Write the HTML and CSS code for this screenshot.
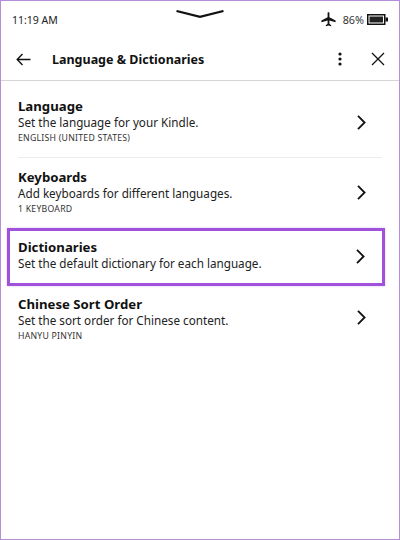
FILE: index.html
```html
<!DOCTYPE html>
<html lang="en">
<head>
<meta charset="utf-8">
<title>Language &amp; Dictionaries</title>
<link rel="stylesheet" href="styles.css">
</head>
<body>
<div class="screen">
  <div class="status">
    <span class="time">11:19 AM</span>
    <svg class="swipe" width="48" height="9" viewBox="0 0 48 9"><path d="M0.5 1L24 6.8L47.5 1" fill="none" stroke="#111" stroke-width="2.2"/></svg>
    <div class="status-right">
      <svg class="plane" width="15" height="15" viewBox="0 0 15 15"><path d="M6.6 0.8C6.6 0.2 8.4 0.2 8.4 0.8V5.3L14.6 8.6V10.2L8.4 8.4V11.8L10.2 13.2V14.2L7.5 13.5L4.8 14.2V13.2L6.6 11.8V8.4L0.4 10.2V8.6L6.6 5.3Z" fill="#111"/></svg>
      <span class="pct">86%</span>
      <svg class="battery" width="21" height="11" viewBox="0 0 21 11"><rect x="0.75" y="0.75" width="17" height="9.5" fill="none" stroke="#111" stroke-width="1.5"/><rect x="2.5" y="2.5" width="13.5" height="6" fill="#222"/><rect x="18.5" y="3.5" width="2.5" height="4" fill="#111"/></svg>
    </div>
  </div>
  <header class="toolbar">
    <svg class="back" width="15" height="13" viewBox="0 0 15 13"><path d="M6.5 1L1.2 6.5L6.5 12M1.2 6.5H14.5" fill="none" stroke="#111" stroke-width="1.4"/></svg>
    <h1 class="title">Language &amp; Dictionaries</h1>
    <svg class="more" width="4" height="14" viewBox="0 0 4 14"><circle cx="2" cy="2" r="1.6" fill="#111"/><circle cx="2" cy="7" r="1.6" fill="#111"/><circle cx="2" cy="12" r="1.6" fill="#111"/></svg>
    <svg class="close" width="14" height="14" viewBox="0 0 14 14"><path d="M1 1L13 13M13 1L1 13" fill="none" stroke="#111" stroke-width="1.3"/></svg>
  </header>
  <main class="list">
    <div class="row row-language">
      <div class="text">
        <div class="name">Language</div>
        <div class="desc">Set the language for your Kindle.</div>
        <div class="value">ENGLISH (UNITED STATES)</div>
      </div>
      <svg class="chev" width="9" height="15" viewBox="0 0 9 15"><path d="M1 0.8L7.6 7.5L1 14.2" fill="none" stroke="#111" stroke-width="1.8"/></svg>
    </div>
    <div class="rule"></div>
    <div class="row row-keyboards">
      <div class="text">
        <div class="name">Keyboards</div>
        <div class="desc">Add keyboards for different languages.</div>
        <div class="value">1 KEYBOARD</div>
      </div>
      <svg class="chev chev-up" width="9" height="15" viewBox="0 0 9 15"><path d="M1 0.8L7.6 7.5L1 14.2" fill="none" stroke="#111" stroke-width="1.8"/></svg>
    </div>
    <div class="row row-dict">
      <div class="text text-dict">
        <div class="name">Dictionaries</div>
        <div class="desc">Set the default dictionary for each language.</div>
      </div>
      <svg class="chev chev-up" width="9" height="15" viewBox="0 0 9 15"><path d="M1 0.8L7.6 7.5L1 14.2" fill="none" stroke="#111" stroke-width="1.8"/></svg>
    </div>
    <div class="row row-chinese">
      <div class="text text-chinese">
        <div class="name">Chinese Sort Order</div>
        <div class="desc">Set the sort order for Chinese content.</div>
        <div class="value">HANYU PINYIN</div>
      </div>
      <svg class="chev" width="9" height="15" viewBox="0 0 9 15"><path d="M1 0.8L7.6 7.5L1 14.2" fill="none" stroke="#111" stroke-width="1.8"/></svg>
    </div>
  </main>
</div>
</body>
</html>
```

FILE: styles.css
```css
* { box-sizing: border-box; }
html, body { margin: 0; padding: 0; }
body { width: 400px; height: 540px; background: #fff; overflow: hidden; font-family: "Noto Sans", "Open Sans", sans-serif; color: #111; }
.screen { width: 400px; height: 540px; border: 1px solid #b48fd8; background: #fff; display: flex; flex-direction: column; }
.status { height: 37px; flex: none; display: flex; align-items: center; justify-content: space-between; padding: 0 11px 0 11px; position: relative; }
.time { font-size: 10.5px; color: #222; }
.swipe { position: absolute; left: 175px; top: 9px; }
.status-right { display: flex; align-items: center; }
.plane { margin-right: 7px; }
.pct { font-size: 10.8px; color: #333; margin-right: 3px; }
.toolbar { height: 43px; flex: none; display: flex; align-items: center; padding: 0 14px 0 15px; border-bottom: 1px solid #d4d4d4; }
.back { margin-right: 21px; }
.title { margin: 0; flex: 1; font-size: 12.5px; font-weight: 700; color: #111; }
.more { margin-right: 29px; }
.list { flex: 1; display: flex; flex-direction: column; }
.row { display: flex; align-items: center; justify-content: space-between; flex: none; padding: 0 33px 0 17px; }
.row-language { height: 76px; padding-top: 7px; }
.row-keyboards { height: 70px; }
.row-dict { height: 58px; margin: 0 14px 0 6px; padding: 0 17px 0 8px; border: 3px solid #a052dc; box-shadow: 0 0 2px #dcc0f0; }
.chev-up { margin-bottom: 2px; }
.text-dict { margin-bottom: 3px; }
.row-chinese { height: 63px; }
.text-chinese { margin-top: 6px; }
.rule { height: 1px; background: #ececec; margin: 0 17px; flex: none; }
.name { font-size: 13.2px; font-weight: 700; line-height: 15px; color: #111; }
.desc { font-size: 11.7px; line-height: 16px; color: #222; }
.value { font-size: 8.7px; letter-spacing: 0.25px; line-height: 15px; margin-top: 1px; color: #333; }
```
